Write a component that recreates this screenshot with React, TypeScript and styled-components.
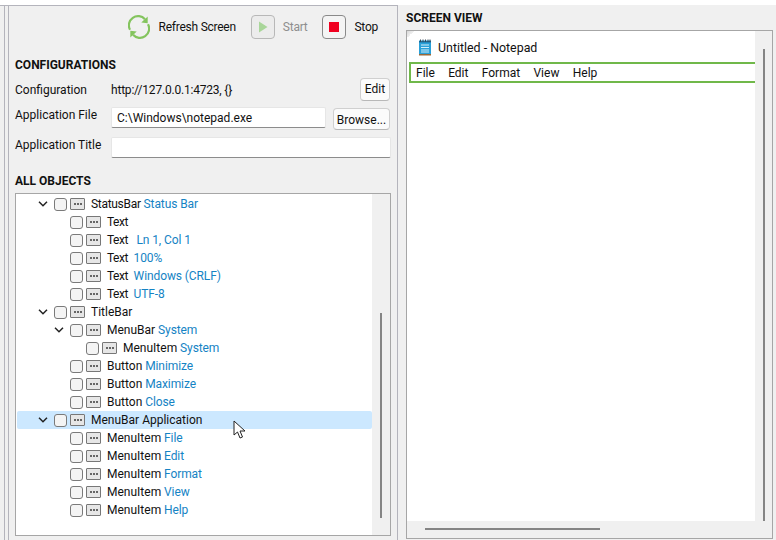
import React from "react";
import styled, { createGlobalStyle } from "styled-components";

const Global = createGlobalStyle`
  html, body { margin: 0; padding: 0; background: #fff; }
  body { width: 776px; height: 540px; overflow: hidden; font-family: Roboto, "Open Sans", sans-serif; font-size: 12px; color: #111; }
  * { box-sizing: border-box; }
`;

const Page = styled.div`
  display: flex;
  width: 776px;
  height: 540px;
  padding-top: 5px;
`;
const Rail = styled.div`
  width: 8px;
  background: #f0f0f0;
  display: flex;
  border-top: 1px solid #b4b4bc;
`;
const RailLine = styled.div`
  width: 1px;
  margin-left: 4px;
  background: #b4b4bc;
`;
const LeftPanel = styled.div`
  width: 390px;
  display: flex;
  flex-direction: column;
  background: #f0f0f0;
  border: 1px solid #b4b4bc;
  border-bottom: none;
  padding: 9px 6px 3px 6px;
`;
const Toolbar = styled.div`
  display: flex;
  align-items: center;
  justify-content: flex-end;
  height: 24px;
  padding-right: 13px;
`;
const ToolLabel = styled.span<{ $off?: boolean; $gap: number }>`
  margin-left: 8px;
  margin-right: ${(p) => p.$gap}px;
  letter-spacing: -0.25px;
  color: ${(p) => (p.$off ? "#8e8e8e" : "#111")};
  white-space: nowrap;
`;
const ToolButton = styled.div<{ $off?: boolean }>`
  width: 24px;
  height: 24px;
  border: 1px solid ${(p) => (p.$off ? "#b8b8b8" : "#8a8a8a")};
  border-radius: 4px;
  background: ${(p) => (p.$off ? "#ececec" : "#f4f4f4")};
  display: flex;
  align-items: center;
  justify-content: center;
`;
const StopMark = styled.div`
  width: 10px;
  height: 10px;
  background: #f00020;
`;
const Heading = styled.div<{ $top: number }>`
  height: 18px;
  line-height: 18px;
  margin-top: ${(p) => p.$top}px;
  font-weight: 700;
  font-size: 12px;
  white-space: nowrap;
`;
const FormRow = styled.div<{ $top: number; $h: number }>`
  display: flex;
  align-items: flex-start;
  height: ${(p) => p.$h}px;
  margin-top: ${(p) => p.$top}px;
`;
const Label = styled.div<{ $dy: number }>`
  width: 96px;
  flex: none;
  height: 16px;
  line-height: 16px;
  margin-top: ${(p) => p.$dy}px;
  white-space: nowrap;
`;
const Value = styled.div`
  flex: 1;
  height: 16px;
  line-height: 16px;
  margin-top: 4px;
  letter-spacing: -0.2px;
  white-space: nowrap;
`;
const Input = styled.div<{ $h: number }>`
  flex: 1;
  height: ${(p) => p.$h}px;
  line-height: ${(p) => p.$h}px;
  background: #fff;
  border: 1px solid #e6e6e6;
  border-bottom: 1px solid #8c8c8c;
  border-radius: 2px;
  padding-left: 5px;
  white-space: nowrap;
`;
const PlainButton = styled.div<{ $w: number; $h: number; $left: number; $dy: number; $lh: number }>`
  width: ${(p) => p.$w}px;
  height: ${(p) => p.$h}px;
  line-height: ${(p) => p.$lh}px;
  margin-left: ${(p) => p.$left}px;
  margin-top: ${(p) => p.$dy}px;
  margin-right: 1px;
  flex: none;
  text-align: center;
  background: #fbfbfb;
  border: 1px solid #d0d0d0;
  border-bottom-color: #b8b8b8;
  border-radius: 4px;
  white-space: nowrap;
`;
const TreeFrame = styled.div`
  margin-top: 3px;
  height: 343px;
  display: flex;
  border: 1px solid #a6a6a6;
  background: #fff;
`;
const TreeList = styled.div`
  flex: 1;
  padding: 1px 0 0 1px;
  overflow: hidden;
`;
const Row = styled.div<{ $selected?: boolean }>`
  display: flex;
  align-items: center;
  height: 18px;
  border-radius: 2px;
  background: ${(p) => (p.$selected ? "#cce8ff" : "transparent")};
  position: relative;
`;
const ChevronSlot = styled.div<{ $level: number }>`
  margin-left: ${(p) => 18 + p.$level * 16}px;
  width: 16px;
  flex: none;
  display: flex;
  align-items: center;
  justify-content: center;
`;
const Check = styled.div`
  width: 13px;
  height: 13px;
  flex: none;
  margin-left: 3px;
  border: 1px solid #7a7a7a;
  border-radius: 3px;
  background: #f4f4f4;
`;
const TypeIcon = styled.div`
  width: 15px;
  height: 12px;
  flex: none;
  margin-left: 3px;
  border: 1px solid #777;
  border-radius: 1px;
  background: #e6e6e6;
  display: flex;
  align-items: center;
  justify-content: center;
  gap: 1px;
`;
const Dot = styled.i`
  display: block;
  width: 2px;
  height: 2px;
  background: #666;
`;
const Name = styled.span<{ $squeeze?: number }>`
  margin-left: 6px;
  white-space: pre;
  color: #111;
  letter-spacing: ${(p) => p.$squeeze ?? 0}px;
`;
const Attr = styled.span`
  white-space: pre;
  color: #1583c4;
  letter-spacing: -0.1px;
`;
const Pointer = styled.svg`
  position: absolute;
  left: 216px;
  top: 9px;
`;
const VTrack = styled.div<{ $w: number; $top: number }>`
  width: ${(p) => p.$w}px;
  flex: none;
  background: #f0f0f0;
  padding-top: ${(p) => p.$top}px;
  display: flex;
  justify-content: center;
`;
const VThumb = styled.div<{ $h: number }>`
  width: 2px;
  height: ${(p) => p.$h}px;
  background: #858585;
`;
const RightPanel = styled.div`
  flex: 1;
  display: flex;
  flex-direction: column;
  background: #f0f0f0;
  padding: 3px 3px 1px 8px;
`;
const ScreenFrame = styled.div`
  margin-top: 3px;
  flex: 1;
  display: flex;
  flex-direction: column;
  border: 1px solid #a6a6a6;
  background: #fff;
`;
const ScreenBody = styled.div`
  flex: 1;
  display: flex;
  min-height: 0;
`;
const Canvas = styled.div`
  flex: 1;
  padding: 1px 0 0 2px;
  position: relative;
  overflow: hidden;
`;
const Corner = styled.div`
  position: absolute;
  left: 0;
  top: 0;
  width: 7px;
  height: 7px;
  background: linear-gradient(135deg, #d8d8d8 0%, #eeeeee 50%, #fff 50%);
`;
const WindowTitle = styled.div`
  display: flex;
  align-items: center;
  height: 30px;
  padding-left: 9px;
  padding-top: 1px;
  gap: 6px;
  font-size: 12.4px;
`;
const Menu = styled.div`
  display: flex;
  align-items: center;
  height: 21px;
  border: 2px solid #70b84a;
  border-right: none;
  padding-left: 5px;
  gap: 13.3px;
`;
const HTrack = styled.div`
  height: 17px;
  background: #f0f0f0;
  padding: 7px 0 0 18px;
`;
const HThumb = styled.div`
  width: 175px;
  height: 2px;
  background: #858585;
`;

type Item = { level: number; chevron?: boolean; name: string; attr?: string; selected?: boolean; squeeze?: number };
const items: Item[] = [
  { level: 0, chevron: true, name: "StatusBar", attr: " Status Bar", squeeze: -0.3 },
  { level: 1, name: "Text", squeeze: -0.5 },
  { level: 1, name: "Text", attr: "   Ln 1, Col 1", squeeze: -0.5 },
  { level: 1, name: "Text", attr: "  100%", squeeze: -0.5 },
  { level: 1, name: "Text", attr: "  Windows (CRLF)", squeeze: -0.5 },
  { level: 1, name: "Text", attr: "  UTF-8", squeeze: -0.5 },
  { level: 0, chevron: true, name: "TitleBar" },
  { level: 1, chevron: true, name: "MenuBar", attr: " System" },
  { level: 2, name: "MenuItem", attr: " System" },
  { level: 1, name: "Button", attr: " Minimize" },
  { level: 1, name: "Button", attr: " Maximize" },
  { level: 1, name: "Button", attr: " Close" },
  { level: 0, chevron: true, name: "MenuBar Application", selected: true },
  { level: 1, name: "MenuItem", attr: " File" },
  { level: 1, name: "MenuItem", attr: " Edit" },
  { level: 1, name: "MenuItem", attr: " Format" },
  { level: 1, name: "MenuItem", attr: " View" },
  { level: 1, name: "MenuItem", attr: " Help" },
];

const Chevron = () => (
  <svg width="10" height="6" viewBox="0 0 10 6">
    <path d="M1 0.8 L5 4.8 L9 0.8" fill="none" stroke="#222" strokeWidth="1.5" />
  </svg>
);

const RefreshIcon = () => (
  <svg width="22" height="24" viewBox="0 0 24 26" style={{ marginRight: 1 }}>
    <path d="M2.2 16 A10 10 0 0 1 18.5 4.6" fill="none" stroke="#84c45e" strokeWidth="2.4" />
    <path d="M21.8 10 A10 10 0 0 1 5.5 21.4" fill="none" stroke="#84c45e" strokeWidth="2.4" />
    <polygon points="21.5,1.5 21.5,9 14.5,8" fill="#84c45e" />
    <polygon points="2.5,24.5 2.5,17 9.5,18" fill="#84c45e" />
  </svg>
);

const NotepadIcon = () => (
  <svg width="14" height="17" viewBox="0 0 14 17">
    <rect x="1" y="1.5" width="12" height="13.5" fill="#2aa0d8" />
    <rect x="1" y="15" width="12" height="1.5" fill="#9a6a3a" />
    <rect x="1" y="2" width="12" height="1.5" fill="#1c6e9c" />
    <path d="M2.5 0.5 V3 M5 0.5 V3 M7.5 0.5 V3 M10 0.5 V3 M12 0.5 V3" stroke="#3a4a58" strokeWidth="1" />
    <path d="M3 6 H11 M3 8.5 H11 M3 11 H11 M3 13 H11" stroke="#d4eef9" strokeWidth="1" />
  </svg>
);

const Cursor = () => (
  <Pointer width="14" height="20" viewBox="0 0 14 20">
    <path d="M1 1 L1 15 L4.5 12 L7 18 L9.5 17 L7 11 L12 11 Z" fill="#fff" stroke="#222" strokeWidth="1" strokeLinejoin="round" />
  </Pointer>
);

export default function App() {
  return (
    <Page>
      <Global />
      <Rail>
        <RailLine />
      </Rail>
      <LeftPanel>
        <Toolbar>
          <RefreshIcon />
          <ToolLabel $gap={15}>Refresh Screen</ToolLabel>
          <ToolButton $off>
            <svg width="10" height="12" viewBox="0 0 10 12">
              <polygon points="1,0.5 9.5,6 1,11.5" fill="#a9d69a" />
            </svg>
          </ToolButton>
          <ToolLabel $off $gap={15}>Start</ToolLabel>
          <ToolButton>
            <StopMark />
          </ToolButton>
          <ToolLabel $gap={0}>Stop</ToolLabel>
        </Toolbar>
        <Heading $top={17}>CONFIGURATIONS</Heading>
        <FormRow $top={4} $h={24}>
          <Label $dy={4}>Configuration</Label>
          <Value>http://127.0.0.1:4723, {"{}"}</Value>
          <PlainButton $w={30} $h={23} $left={0} $dy={0} $lh={21}>Edit</PlainButton>
        </FormRow>
        <FormRow $top={5} $h={23}>
          <Label $dy={0}>Application File</Label>
          <Input $h={21}>C:\Windows\notepad.exe</Input>
          <PlainButton $w={57} $h={22} $left={7} $dy={1} $lh={22}>Browse...</PlainButton>
        </FormRow>
        <FormRow $top={7} $h={22}>
          <Label $dy={0}>Application Title</Label>
          <Input $h={21} />
        </FormRow>
        <Heading $top={13}>ALL OBJECTS</Heading>
        <TreeFrame>
          <TreeList>
            {items.map((it, i) => (
              <Row key={i} $selected={it.selected}>
                <ChevronSlot $level={it.level}>{it.chevron ? <Chevron /> : null}</ChevronSlot>
                <Check />
                <TypeIcon>
                  <Dot />
                  <Dot />
                  <Dot />
                </TypeIcon>
                <Name $squeeze={it.squeeze}>
                  {it.name}
                  {it.attr ? <Attr>{it.attr}</Attr> : null}
                </Name>
                {it.selected ? <Cursor /> : null}
              </Row>
            ))}
          </TreeList>
          <VTrack $w={18} $top={119}>
            <VThumb $h={205} />
          </VTrack>
        </TreeFrame>
      </LeftPanel>
      <RightPanel>
        <Heading $top={1}>SCREEN VIEW</Heading>
        <ScreenFrame>
          <ScreenBody>
            <Canvas>
              <Corner />
              <WindowTitle>
                <NotepadIcon />
                <span>Untitled - Notepad</span>
              </WindowTitle>
              <Menu>
                <span>File</span>
                <span>Edit</span>
                <span>Format</span>
                <span>View</span>
                <span>Help</span>
              </Menu>
            </Canvas>
            <VTrack $w={17} $top={18}>
              <VThumb $h={472} />
            </VTrack>
          </ScreenBody>
          <HTrack>
            <HThumb />
          </HTrack>
        </ScreenFrame>
      </RightPanel>
    </Page>
  );
}
